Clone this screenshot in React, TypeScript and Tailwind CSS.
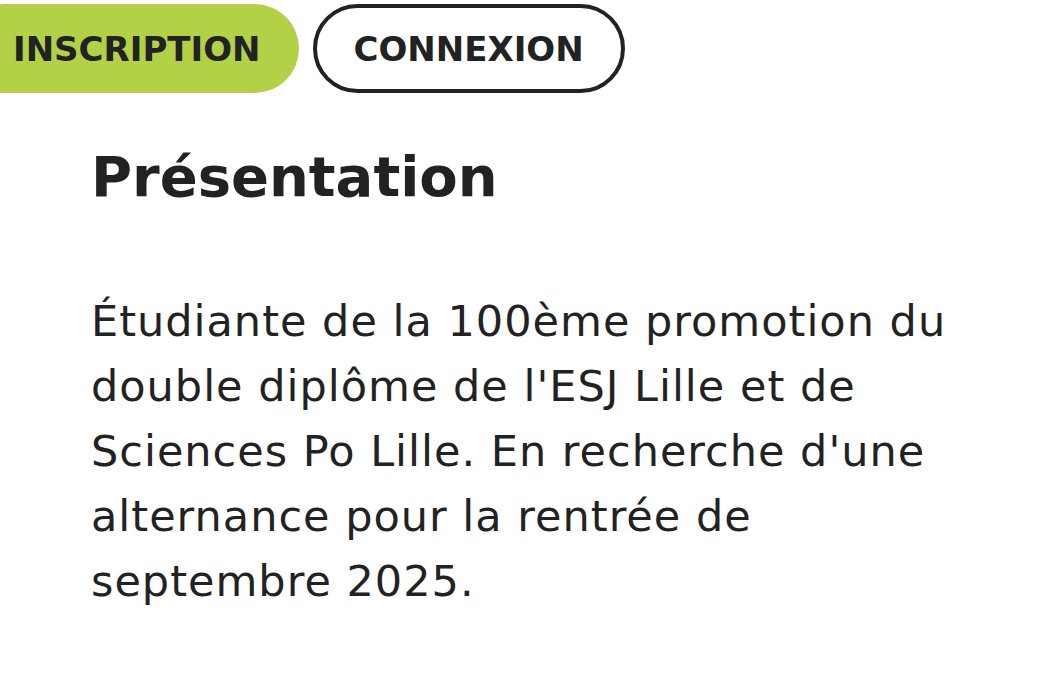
import React from 'react';

const font = { fontFamily: '"DejaVu Sans", "Open Sans", sans-serif' };

const App: React.FC = () => {
    return (
        <div className="min-h-screen w-full bg-white text-[#222222] overflow-hidden" style={font}>
            {/* Auth buttons */}
            <div className="flex items-center gap-[14px] pt-[4px] -ml-[40px]">
                <button className="h-[89px] pl-[53px] pr-[38px] rounded-full bg-[#b3d147] text-[34px] font-bold uppercase leading-none text-[#222222]">
                    Inscription
                </button>
                <button className="h-[89px] px-[37px] rounded-full border-[4px] border-[#222222] bg-white text-[34px] font-bold uppercase leading-none text-[#222222]">
                    Connexion
                </button>
            </div>

            {/* Presentation */}
            <section className="px-[91px] pt-[48px]">
                <h2 className="text-[56px] font-bold leading-[72px]">Présentation</h2>
                <p className="mt-[76px] text-[43px] leading-[65px] tracking-[1px]">
                    Étudiante de la 100ème promotion du
                    <br />
                    double diplôme de l'ESJ Lille et de
                    <br />
                    Sciences Po Lille. En recherche d'une
                    <br />
                    alternance pour la rentrée de
                    <br />
                    septembre 2025.
                </p>
            </section>
        </div>
    );
};

export default App;
